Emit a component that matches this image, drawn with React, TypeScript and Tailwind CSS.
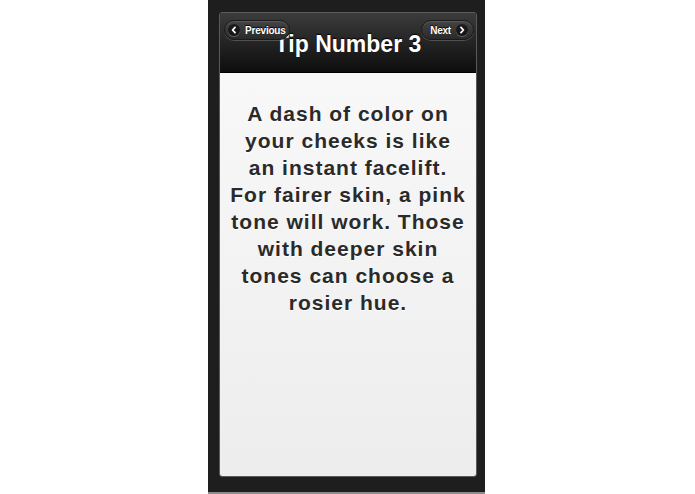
import { ReactNode } from "react";

function NavButton({
  label,
  dir,
  className,
}: {
  label: string;
  dir: "left" | "right";
  className: string;
}) {
  const icon = (
    <span className="flex items-center justify-center w-[12px] h-[12px] rounded-full bg-[rgba(0,0,0,0.55)] shadow-[0_1px_0_rgba(255,255,255,0.25)]">
      <svg viewBox="0 0 10 10" className="w-[8px] h-[8px]">
        <path
          d={dir === "left" ? "M6.3 1.8 3.2 5l3.1 3.2" : "M3.7 1.8 6.8 5 3.7 8.2"}
          fill="none"
          stroke="#fff"
          strokeWidth="2.2"
          strokeLinecap="round"
          strokeLinejoin="round"
        />
      </svg>
    </span>
  );
  return (
    <button
      className={`absolute top-[7px] h-[20px] flex items-center rounded-full border border-[#1a1a1a] bg-linear-to-b from-[#444] to-[#2a2a2a] shadow-[0_1px_0_rgba(255,255,255,0.2),inset_0_1px_0_rgba(255,255,255,0.12)] text-white text-[10px] font-bold tracking-[-0.2px] [text-shadow:0_-1px_1px_#000] ${className}`}
    >
      {dir === "left" && icon}
      <span>{label}</span>
      {dir === "right" && icon}
    </button>
  );
}

function Page({ children }: { children: ReactNode }) {
  return (
    <main className="flex-1 bg-linear-to-b from-[#f8f8f8] to-[#ededed] pt-[27px]">
      {children}
    </main>
  );
}

export default function App() {
  return (
    <div className="w-[695px] h-[494px] bg-white font-['Liberation_Sans',Arial,sans-serif]">
      <div className="ml-[208px] w-[277px] h-[494px] bg-[#1e1e1e] border-b-2 border-[#8c8c8c] pt-[12px] pl-[11px]">
        <div className="w-[258px] h-[465px] rounded-[3px] border border-[#5a5a5a] overflow-hidden flex flex-col">
          <header className="relative h-[60px] bg-linear-to-b from-[#3c3c3c] to-[#0e0e0e] border-b border-black pt-[19px]">
            <h1 className="text-center text-white font-bold text-[23px] leading-[24px] [text-shadow:0_-1px_1px_#000]">
              Tip Number 3
            </h1>
            <NavButton label="Previous" dir="left" className="left-[4px] pl-[3px] pr-[3px] gap-[5px]" />
            <NavButton label="Next" dir="right" className="right-[2px] pl-[8px] pr-[5px] gap-[5px]" />
          </header>
          <Page>
            <p className="w-[238px] mx-auto text-center text-[#2a2a2a] font-bold text-[21px] leading-[27px] tracking-[1px] [text-shadow:0_1px_0_#fff]">
              A dash of color on your cheeks is like an instant facelift. For
              fairer skin, a pink tone will work. Those with deeper skin tones
              can choose a rosier hue.
            </p>
          </Page>
        </div>
      </div>
    </div>
  );
}
